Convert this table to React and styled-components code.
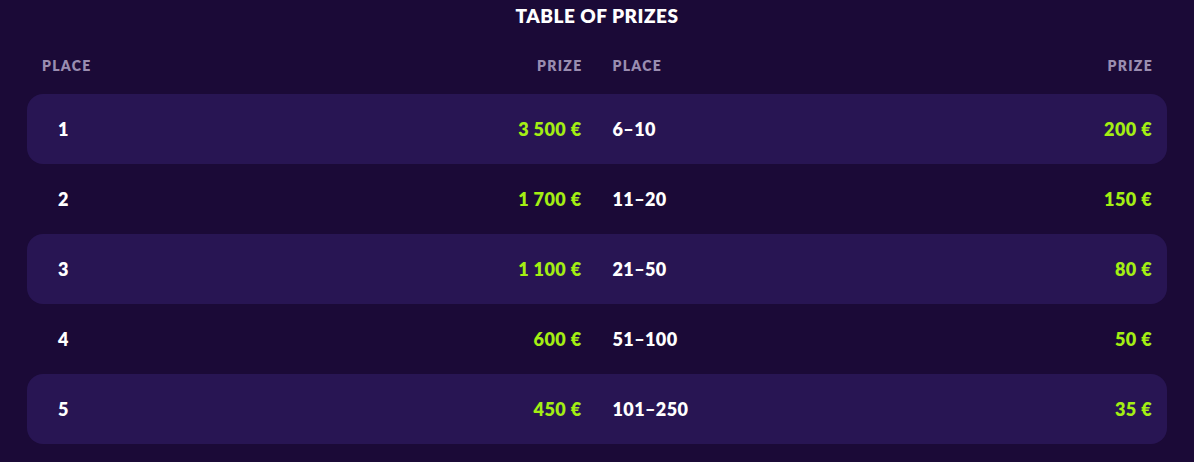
import React from 'react'
import styled, { createGlobalStyle } from 'styled-components'

const GlobalStyle = createGlobalStyle`
  html, body {
    margin: 0;
    padding: 0;
    background: #1b0a37;
  }
  body {
    font-family: Lato, "Noto Sans", sans-serif;
  }
`

const Page = styled.section`
  width: 1194px;
  height: 462px;
  box-sizing: border-box;
  padding: 0 27px;
  background: #1b0a37;
  overflow: hidden;
`

const Title = styled.h2`
  margin: 0;
  padding-top: 5px;
  height: 34px;
  text-align: center;
  color: #ffffff;
  font-size: 19px;
  font-weight: 800;
  letter-spacing: 0.5px;
  line-height: 22px;
`

const Row = styled.div`
  display: grid;
  grid-template-columns: repeat(4, 1fr);
  column-gap: 31px;
  align-items: center;
  padding: 0 15px;
  height: ${props => (props.$head ? '55px' : '70px')};
  border-radius: 16px;
  background: ${props => (props.$shaded ? '#281553' : 'transparent')};
`

const HeadCell = styled.div`
  color: #9a8db0;
  font-size: 14px;
  font-weight: 800;
  letter-spacing: 1.3px;
  text-align: ${props => (props.$right ? 'right' : 'left')};
  margin-right: ${props => (props.$right ? '-1px' : '0')};
  padding-bottom: 2px;
`

const Place = styled.div`
  color: #ffffff;
  font-size: 18px;
  font-weight: 800;
  letter-spacing: 0.4px;
  padding-left: ${props => (props.$indent ? '16px' : '0')};
`

const Prize = styled.div`
  color: #a4ef13;
  font-size: 18px;
  font-weight: 800;
  letter-spacing: 0.4px;
  text-align: right;
`

const rows = [
  ['1', '3 500 €', '6–10', '200 €'],
  ['2', '1 700 €', '11–20', '150 €'],
  ['3', '1 100 €', '21–50', '80 €'],
  ['4', '600 €', '51–100', '50 €'],
  ['5', '450 €', '101–250', '35 €'],
]

const App = () => (
  <Page>
    <GlobalStyle />
    <Title>TABLE OF PRIZES</Title>
    <Row $head>
      <HeadCell>PLACE</HeadCell>
      <HeadCell $right>PRIZE</HeadCell>
      <HeadCell>PLACE</HeadCell>
      <HeadCell $right>PRIZE</HeadCell>
    </Row>
    {rows.map((r, i) => (
      <Row key={r[0]} $shaded={i % 2 === 0}>
        <Place $indent>{r[0]}</Place>
        <Prize>{r[1]}</Prize>
        <Place>{r[2]}</Place>
        <Prize>{r[3]}</Prize>
      </Row>
    ))}
  </Page>
)

export default App
